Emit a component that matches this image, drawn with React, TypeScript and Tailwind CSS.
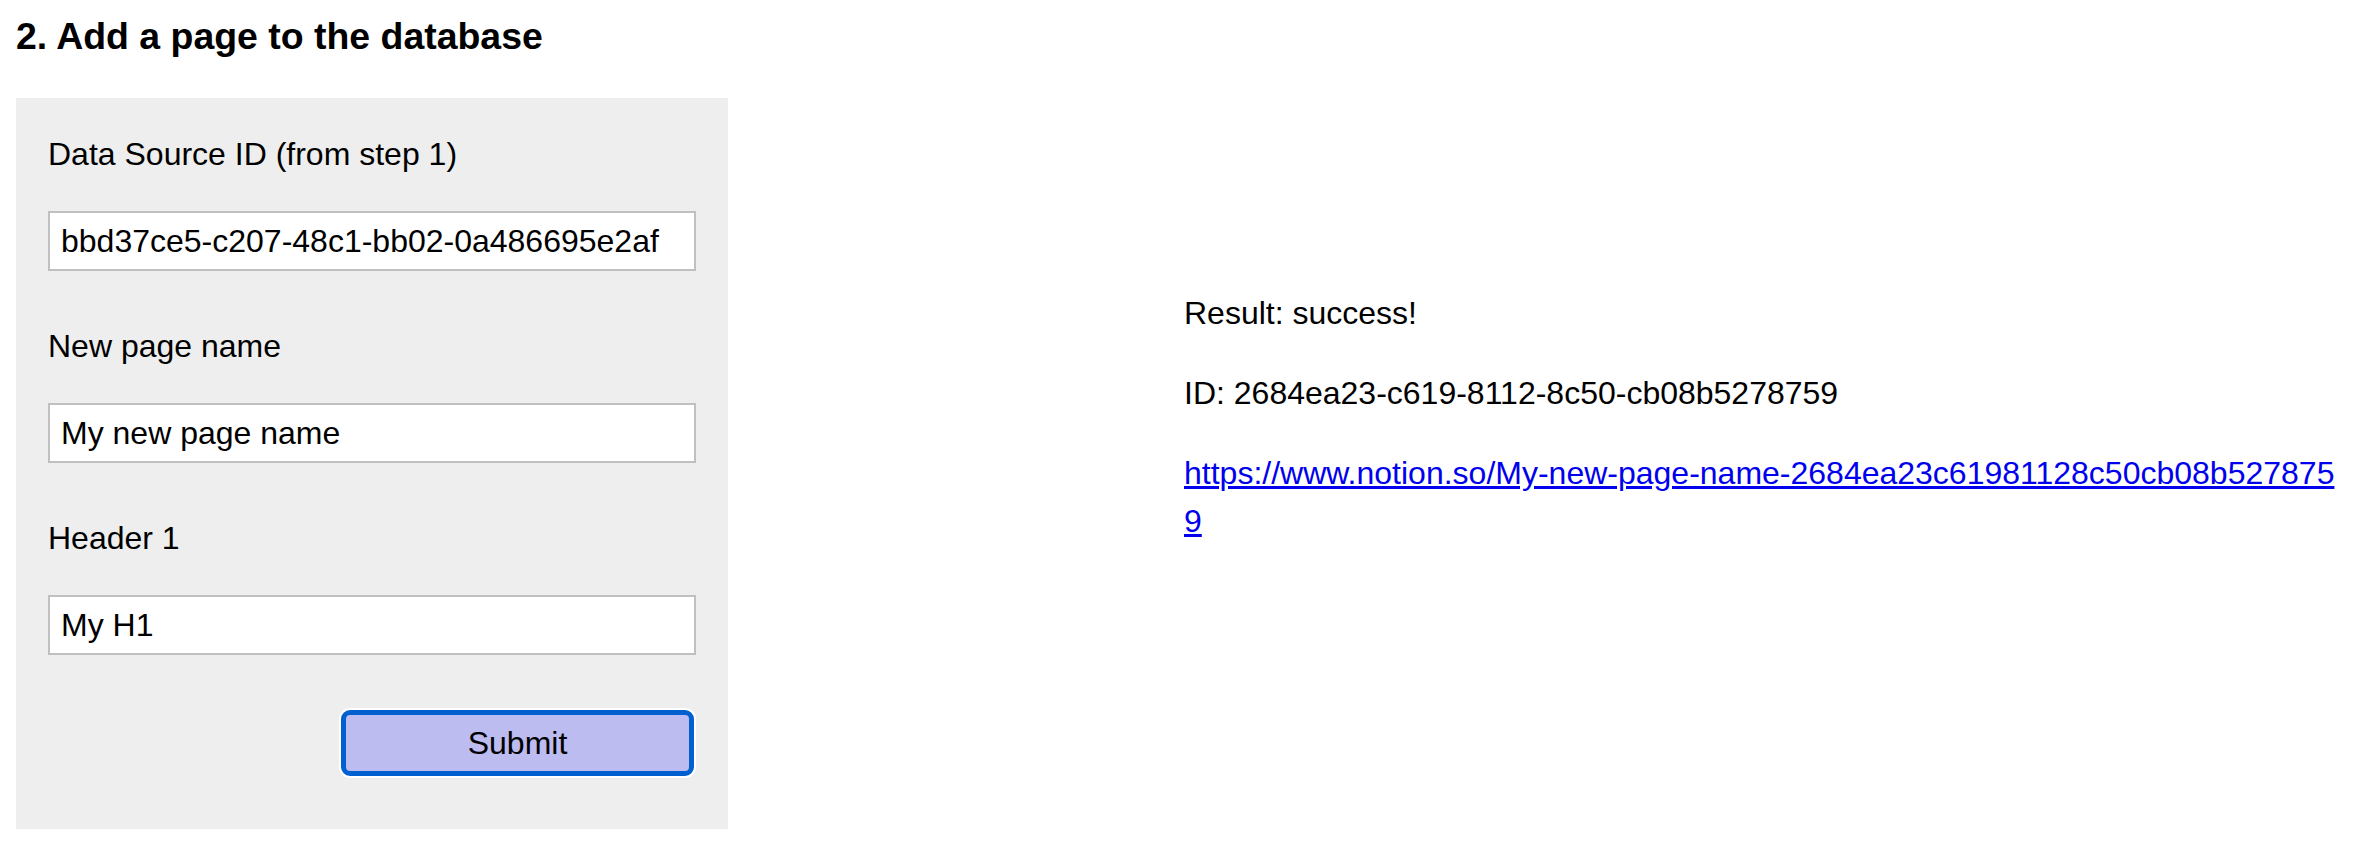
import { useState } from 'react'

export default function App() {
  const [sourceId, setSourceId] = useState('bbd37ce5-c207-48c1-bb02-0a486695e2af')
  const [pageName, setPageName] = useState('My new page name')
  const [header, setHeader] = useState('My H1')

  const pageId = '2684ea23-c619-8112-8c50-cb08b5278759'
  const pageUrl = 'https://www.notion.so/My-new-page-name-2684ea23c61981128c50cb08b5278759'

  return (
    <div className="min-h-screen bg-white px-4 pt-[14px] font-['Liberation_Sans',Arial,sans-serif] text-[32px] text-black">
      <h3 className="mb-[40px] text-[37.44px] font-bold leading-[44px]">
        2. Add a page to the database
      </h3>

      <div className="grid grid-cols-2">
        {/* Form */}
        <form
          className="w-[712px] bg-[#eeeeee] px-8 pt-8 pb-[53px]"
          onSubmit={(e) => e.preventDefault()}
        >
          <label className="block leading-[48px]">Data Source ID (from step 1)</label>
          <input
            value={sourceId}
            onChange={(e) => setSourceId(e.target.value)}
            className="mt-[33px] block h-[60px] w-[648px] border-2 border-[#c0c0c0] bg-white px-[11px] outline-none"
          />

          <label className="mt-[51px] block leading-[48px]">New page name</label>
          <input
            value={pageName}
            onChange={(e) => setPageName(e.target.value)}
            className="mt-[33px] block h-[60px] w-[648px] border-2 border-[#c0c0c0] bg-white px-[11px] outline-none"
          />

          <label className="mt-[51px] block leading-[48px]">Header 1</label>
          <input
            value={header}
            onChange={(e) => setHeader(e.target.value)}
            className="mt-[33px] block h-[60px] w-[648px] border-2 border-[#c0c0c0] bg-white px-[11px] outline-none"
          />

          <div className="mt-[55px] flex w-[648px] justify-end">
            <button
              type="submit"
              className="mr-[2px] h-[66px] w-[353px] rounded-[9px] border-[5px] border-[#0060d0] bg-[#bcbcf0] text-[32px] ring-2 ring-white"
            >
              Submit
            </button>
          </div>
        </form>

        {/* Result */}
        <div className="ml-[4px] mt-[191px] leading-[48px]">
          <p className="mb-8">Result: success!</p>
          <p className="mb-8">ID: {pageId}</p>
          <p className="break-all">
            <a href={pageUrl} className="text-[#0000ee] underline">
              {pageUrl}
            </a>
          </p>
        </div>
      </div>
    </div>
  )
}
